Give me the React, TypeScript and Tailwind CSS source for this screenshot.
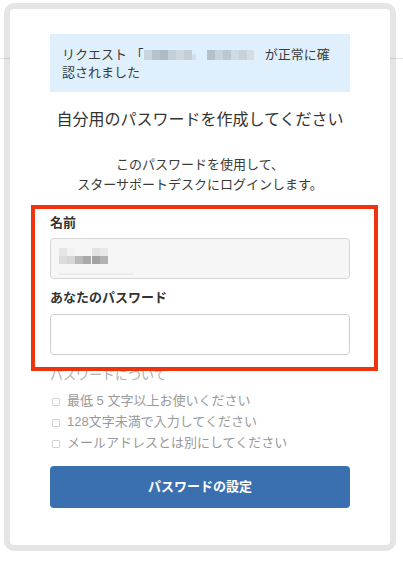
import React from "react";

const font = { fontFamily: '"Liberation Sans", "Noto Sans CJK JP", sans-serif' };

function Mosaic({ cells, w, h }: { cells: [number, number, number, number, string][]; w: number; h: number }) {
  return (
    <svg width={w} height={h} viewBox={`0 0 ${w} ${h}`} className="block">
      {cells.map(([x, y, cw, ch, c], i) => (
        <rect key={i} x={x} y={y} width={cw} height={ch} fill={c} />
      ))}
    </svg>
  );
}

const bannerCells: [number, number, number, number, string][] = [
  [0, 2, 8, 10, "#c9d4dc"],
  [8, 2, 8, 10, "#b7c3cc"],
  [16, 2, 8, 10, "#aebbc5"],
  [24, 2, 8, 10, "#c4cfd8"],
  [32, 2, 8, 10, "#cdd7df"],
  [40, 2, 8, 10, "#c2cdd6"],
  [48, 6, 4, 6, "#d6e0e8"],
  [63, 2, 8, 10, "#b4c0ca"],
  [71, 2, 8, 10, "#c8d3dc"],
  [79, 2, 8, 10, "#bcc8d1"],
  [87, 2, 8, 10, "#cfd9e1"],
  [95, 2, 8, 10, "#c6d1da"],
  [103, 2, 7, 10, "#d3dde5"],
];

const nameCells: [number, number, number, number, string][] = [
  [0, 0, 8, 8, "#e6e6e6"],
  [8, 0, 8, 8, "#f2f2f2"],
  [33, 0, 8, 8, "#e3e3e3"],
  [41, 0, 8, 8, "#e8e8e8"],
  [0, 8, 8, 8, "#dcdcdc"],
  [8, 8, 8, 8, "#d7d7d7"],
  [16, 8, 8, 8, "#b9b9b9"],
  [24, 8, 8, 8, "#a9a9a9"],
  [33, 8, 8, 8, "#a3a3a3"],
  [41, 8, 8, 8, "#b2b2b2"],
];

function Check({ text }: { text: string }) {
  return (
    <li className="flex items-center h-[21px] text-[13px] text-[#999]">
      <span className="ml-[2px] mt-[2px] w-[8px] h-[8px] border border-[#d4d4d4] rounded-[1px] bg-white shrink-0" />
      <span className="ml-[7px] leading-[21px]">{text}</span>
    </li>
  );
}

export default function App() {
  return (
    <div className="relative w-[403px] h-[572px] bg-white overflow-hidden" style={font}>
      <div className="absolute left-0 right-0 top-[58px] h-px bg-[#e3e3e3]" />
      <div className="relative ml-[4px] mt-[3px] w-[392px] h-[548px] rounded-[10px] border-[6px] border-[rgba(0,0,0,0.1)] bg-white bg-clip-padding">
        <div className="px-[40px] pt-[25px]">
          <div className="h-[58px] bg-[#dff0fc] pl-[12px] pr-[8px] pt-[12px] text-[13px] leading-[18px] text-[#3a3a3a]">
            <div className="flex items-center whitespace-nowrap">
              <span>リクエスト 「</span>
              <span className="inline-block">
                <Mosaic cells={bannerCells} w={110} h={14} />
              </span>
              <span className="ml-[11px]">が正常に確</span>
            </div>
            <div>認されました</div>
          </div>

          <h1 className="mt-[16px] text-center text-[16px] leading-[24px] text-[#333] whitespace-nowrap">
            自分用のパスワードを作成してください
          </h1>

          <p className="mt-[23px] text-center text-[13px] leading-[20px] text-[#3a3a3a]">
            このパスワードを使用して、
            <br />
            スターサポートデスクにログインします。
          </p>

          <div className="relative mt-[18px]">
            <div className="text-[13px] leading-[20px] font-bold text-[#333]">名前</div>
            <div className="mt-[5px] h-[41px] rounded-[4px] border border-[#d6d6d6] bg-[#f6f6f6] pl-[8px] pt-[9px]">
              <Mosaic cells={nameCells} w={49} h={16} />
              <div className="mt-[9px] h-[2px] w-[74px] bg-[#ececec]" />
            </div>
            <div className="mt-[9px] text-[13px] leading-[20px] font-bold text-[#333]">あなたのパスワード</div>
            <div className="mt-[6px] h-[41px] rounded-[4px] border border-[#cfcfcf] bg-white" />
            <div className="absolute left-[-19px] right-[-28px] top-[-8px] bottom-[-16px] border-[4px] border-[#f0330f] pointer-events-none" />
          </div>

          <div className="mt-[10px] text-[13px] leading-[20px] text-[#b0b0b0]">パスワードについて</div>
          <ul className="mt-[5px]">
            <Check text="最低 5 文字以上お使いください" />
            <Check text="128文字未満で入力してください" />
            <Check text="メールアドレスとは別にしてください" />
          </ul>

          <button className="mt-[13px] w-full h-[42px] rounded-[4px] bg-[#3b70b0] text-white text-[13px] font-bold">
            パスワードの設定
          </button>
        </div>
      </div>
    </div>
  );
}
